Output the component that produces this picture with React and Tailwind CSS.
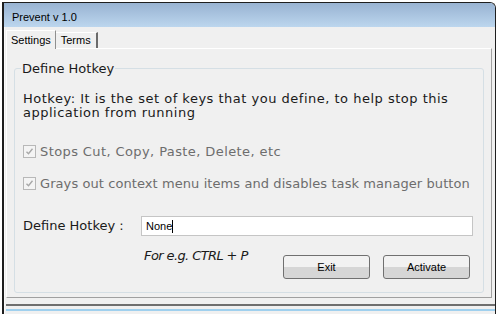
import * as React from "react";

const SANS = { fontFamily: '"Liberation Sans", Arial, sans-serif' };

function CheckRow({ label, track }) {
    return (
        <label className="flex items-center gap-[4px] text-[#6d6d6d]">
            <span className="w-[13px] h-[13px] border border-[#b8b8b8] bg-[#f4f4f4] flex items-center justify-center">
                <svg width="9" height="9" viewBox="0 0 9 9">
                    <path d="M1.5 4.8 L3.5 6.8 L7.5 1.8" fill="none" stroke="#a8a8a8" strokeWidth="1.4" />
                </svg>
            </span>
            <span className={track}>{label}</span>
        </label>
    );
}

export default function App() {
    return (
        <div className="w-[497px] h-[314px] bg-white overflow-hidden">
            <div className="ml-[2px] mt-[2px] w-[494px] h-[312px] flex flex-col border-l-2 border-r border-t border-[#1e1e1e] rounded-tr-[6px] bg-[#f0f0f0] overflow-hidden">
                {/* title bar */}
                <div className="h-[24px] shrink-0 bg-gradient-to-b from-[#98b3d2] to-[#bcd6ee] flex items-start pt-[7px] pl-[8px] text-[11px] leading-[14px] text-black" style={SANS}>
                    Prevent v 1.0
                </div>
                <div className="flex-1 flex flex-col bg-[#f0f0f0] border-l border-[#fafafa] pl-[1px]">
                    {/* tabs */}
                    <div className="flex items-end h-[21px] text-[11px]" style={SANS}>
                        <div className="h-[19px] px-[4px] flex items-center border border-b-0 border-[#8f8f8f] border-t-white border-l-white bg-[#f0f0f0] relative z-10 -mb-px">
                            Settings
                        </div>
                        <div className="h-[16px] px-[5px] flex items-center border-r-2 border-[#6b6b6b] border-t border-t-white">
                            Terms
                        </div>
                    </div>
                    {/* tab panel */}
                    <div className="w-[486px] h-[250px] border border-white border-r-[#a0a0a0] border-b-[#a0a0a0] px-[7px] pt-[19px] pb-[4px] text-[13px] text-[#1a1a1a]" style={{ fontFamily: '"DejaVu Sans", Verdana, sans-serif' }}>
                        <div className="relative h-[225px] border border-[#d5dfe5] rounded-[3px] pl-[8px] pr-[10px] pt-[23px]">
                            <span className="absolute -top-[10px] left-[6px] px-[1px] bg-[#f0f0f0] text-[#1a1a1a]">Define Hotkey</span>
                            <p className="leading-[14px] tracking-[0.5px]">
                                Hotkey: It is the set of keys that you define, to help stop this application from running
                            </p>
                            <div className="mt-[22px] flex flex-col gap-[12px]">
                                <CheckRow label="Stops Cut, Copy, Paste, Delete, etc" track="tracking-[0.4px]" />
                                <CheckRow label="Grays out context menu items and disables task manager button" track="tracking-[0.08px]" />
                            </div>
                            <div className="mt-[23px] flex items-center">
                                <span className="w-[118px]">Define Hotkey :</span>
                                <div className="w-[332px] h-[20px] border border-[#c5c5c5] bg-white flex items-center pl-[4px] text-[11px] text-black" style={SANS}>
                                    None<span className="w-px h-[13px] bg-black"></span>
                                </div>
                            </div>
                            <div className="flex items-start mt-[10px]">
                                <span className="ml-[121px] italic tracking-[-0.6px]">For e.g. CTRL + P</span>
                                <div className="ml-auto mr-[3px] flex gap-[13px] mt-[9px] text-[11px] text-black" style={SANS}>
                                    <button className="w-[87px] h-[24px] rounded-[3px] border border-[#707070] bg-gradient-to-b from-[#f2f2f2] from-50% to-[#d6d6d6] to-50%">Exit</button>
                                    <button className="w-[87px] h-[24px] rounded-[3px] border border-[#707070] bg-gradient-to-b from-[#f2f2f2] from-50% to-[#d6d6d6] to-50%">Activate</button>
                                </div>
                            </div>
                        </div>
                    </div>
                    <div className="mt-[6px] h-[2px] w-[489px] bg-[#6e6e6e]"></div>
                    <div className="h-[3px] bg-[#f0f0f0]"></div>
                    <div className="h-[2px] bg-[#9fd0ee]"></div>
                </div>
            </div>
        </div>
    );
}
